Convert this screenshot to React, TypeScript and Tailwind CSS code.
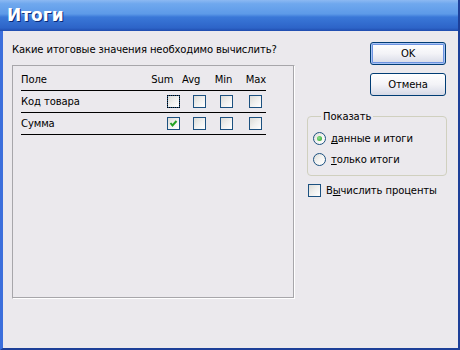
import React, { ReactElement } from 'react'

const font = { fontFamily: '"DejaVu Sans", Tahoma, sans-serif' }

function XpCheck({ checked = false, focused = false }: { checked?: boolean; focused?: boolean }): ReactElement {
    return (
        <div className="relative h-[13px] w-[13px] border border-[#1c5180] bg-gradient-to-br from-[#dcdcd7] via-[#f0f0ee] to-white">
            {focused && <div className="absolute inset-[-1px] border border-dotted border-black" />}
            {checked && (
                <svg viewBox="0 0 11 11" className="absolute inset-0 h-[11px] w-[11px]">
                    <path d="M2.5 5 L4.5 7.5 L8.5 3" fill="none" stroke="#21a121" strokeWidth="2" />
                </svg>
            )}
        </div>
    )
}

function XpRadio({ checked = false }: { checked?: boolean }): ReactElement {
    return (
        <div className="flex h-[13px] w-[13px] items-center justify-center rounded-full border border-[#1c5180] bg-gradient-to-br from-[#dcdcd7] via-[#f4f4f2] to-white">
            {checked && <div className="h-[5px] w-[5px] rounded-full bg-[radial-gradient(circle_at_40%_40%,#8ee08e,#21a121)]" />}
        </div>
    )
}

function XpButton({ label, isDefault = false }: { label: string; isDefault?: boolean }): ReactElement {
    return (
        <div
            className={
                isDefault
                    ? 'flex h-[23px] w-[76px] items-center justify-center rounded-[3px] border border-[#003c74] bg-gradient-to-b from-white via-[#f3f3f7] to-[#d6d9e6] text-[10px] text-black shadow-[inset_0_0_0_1px_#a9c4f5,inset_0_0_0_2px_#6d93e0]'
                    : 'flex h-[23px] w-[76px] items-center justify-center rounded-[3px] border border-[#003c74] bg-gradient-to-b from-white via-[#f3f3f7] to-[#d6d9e6] text-[10px] text-black'
            }
        >
            {label}
        </div>
    )
}

const ROWS = [
    { name: 'Код товара', sumChecked: false, focused: true },
    { name: 'Сумма', sumChecked: true, focused: false },
]

export default function App(): ReactElement {
    return (
        <div className="flex h-[350px] w-[460px] flex-col overflow-hidden bg-[#ebe9ed] text-black" style={font}>
            {/* title bar */}
            <div className="flex h-[31px] items-center border-r-2 border-[#1d3f98] bg-[linear-gradient(to_bottom,#8cb9f2_0%,#6fa8ee_12%,#5d9ae8_45%,#3a78d8_55%,#2d64c8_90%,#1f4cae_100%)] pl-[7px]">
                <span className="text-[17px] font-bold text-white [text-shadow:1px_1px_0_#0a2a78]">Итоги</span>
            </div>

            {/* body */}
            <div className="flex flex-1 border-b-2 border-l-[3px] border-r-2 border-b-[#1d3f98] border-l-[#3c6fdc] border-r-[#1d3f98] pl-[9px] tracking-[-0.1px]">
                <div className="flex w-[283px] flex-col">
                    <div className="mt-[12px] text-[10px] leading-[13px]">Какие итоговые значения необходимо вычислить?</div>
                    <div className="mt-[9px] h-[234px] border border-b-white border-l-[#a7a6aa] border-r-white border-t-[#a7a6aa] shadow-[inset_-1px_-1px_0_#a7a6aa]">
                        <div className="ml-[8px] mt-[3px] w-[245px] text-[10px]">
                            <div className="flex h-[22px] items-center border-b border-black">
                                <span className="w-[131px]">Поле</span>
                                <span className="w-[31px]">Sum</span>
                                <span className="w-[33px]">Avg</span>
                                <span className="w-[31px]">Min</span>
                                <span>Max</span>
                            </div>
                            {ROWS.map((row) => (
                                <div key={row.name} className="flex h-[22px] items-center border-b border-black">
                                    <span className="w-[146px]">{row.name}</span>
                                    <div className="w-[26px]">
                                        <XpCheck checked={row.sumChecked} focused={row.focused} />
                                    </div>
                                    <div className="w-[27px]">
                                        <XpCheck />
                                    </div>
                                    <div className="w-[29px]">
                                        <XpCheck />
                                    </div>
                                    <XpCheck />
                                </div>
                            ))}
                        </div>
                    </div>
                </div>

                <div className="ml-[12px] flex w-[140px] flex-col pt-[11px]">
                    <div className="ml-[63px] flex flex-col gap-[8px]">
                        <XpButton label="OK" isDefault />
                        <XpButton label="Отмена" />
                    </div>

                    <fieldset className="mt-[14px] rounded-[4px] border border-[#d0d0bf] pb-[5px] pl-[5px] pt-[5px] text-[10px]">
                        <legend className="ml-[8px] px-[2px] leading-[13px]">Показать</legend>
                        <div className="flex h-[21px] items-center gap-[5px]">
                            <XpRadio checked />
                            <span>
                                <span className="underline">д</span>анные и итоги
                            </span>
                        </div>
                        <div className="flex h-[21px] items-center gap-[5px]">
                            <XpRadio />
                            <span>
                                <span className="underline">т</span>олько итоги
                            </span>
                        </div>
                    </fieldset>

                    <div className="ml-[1px] mt-[8px] flex h-[13px] items-center gap-[5px] text-[10px]">
                        <XpCheck />
                        <span>
                            В<span className="underline">ы</span>числить проценты
                        </span>
                    </div>
                </div>
            </div>
        </div>
    )
}
